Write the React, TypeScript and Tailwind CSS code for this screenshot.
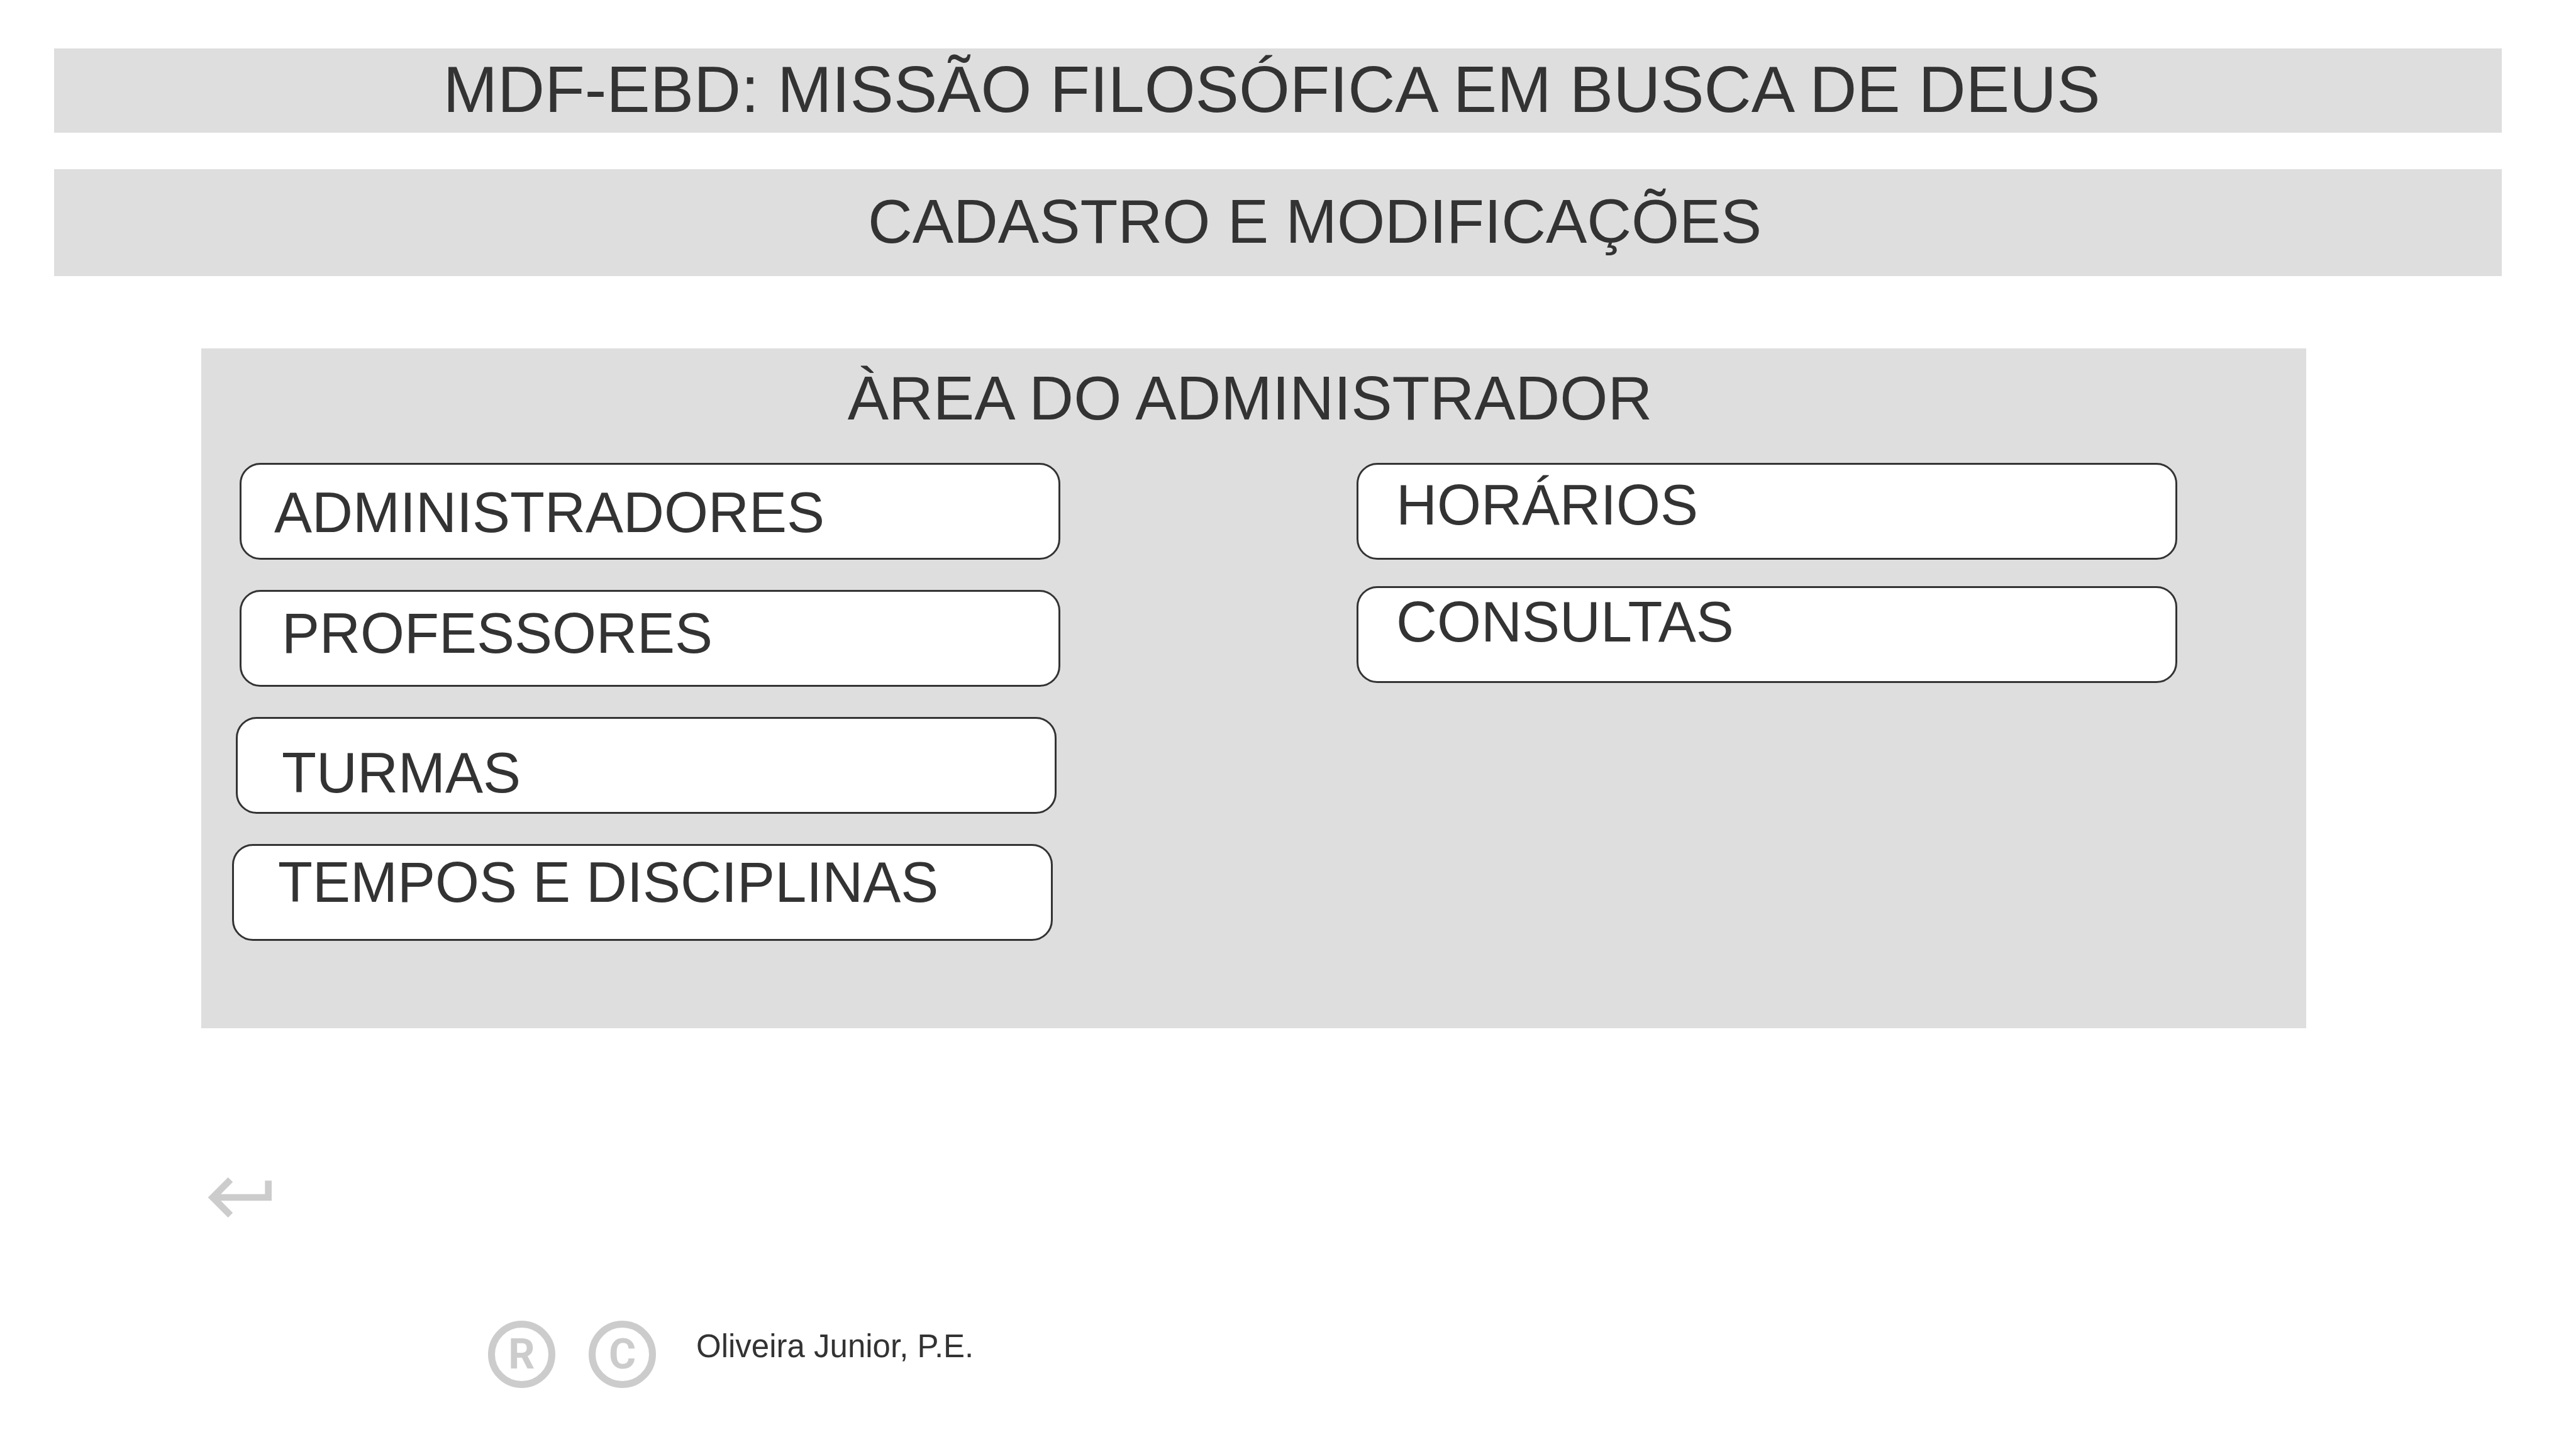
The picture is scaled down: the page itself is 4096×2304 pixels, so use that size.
type Option = { label: string; box: string; text: string };

const people: Option[] = [
  { label: "ADMINISTRADORES", box: "pl-3", text: "pt-6.5 pl-13" },
  { label: "PROFESSORES", box: "pl-3", text: "pt-4 pl-16" },
  { label: "TURMAS", box: "px-1.5", text: "pt-9 pl-[70px]" },
  { label: "TEMPOS E DISCIPLINAS", box: "pr-3", text: "pt-2 pl-[70px]" },
];

const schedule: Option[] = [
  { label: "HORÁRIOS", box: "pl-3", text: "pt-3.5 pl-15" },
  { label: "CONSULTAS", box: "pl-3", text: "pt-1 pl-15" },
];

function OptionButton({ label, box, text }: Option) {
  return (
    <li className={box}>
      <button
        type="button"
        className={`flex h-[154px] w-full items-start rounded-[33px] border-3 border-[#333333] bg-white text-left text-[90px] leading-[100px] whitespace-nowrap ${text}`}
      >
        {label}
      </button>
    </li>
  );
}

function Mark({ letter, name }: { letter: string; name: string }) {
  return (
    <span
      role="img"
      aria-label={name}
      className="flex size-[107px] items-center justify-center rounded-full border-[11px] border-[#cccccc] font-['Roboto',sans-serif] text-[66px] leading-none font-bold text-[#cccccc]"
    >
      {letter}
    </span>
  );
}

export default function App() {
  return (
    <div className="min-h-screen bg-white pt-[77px] font-['Liberation_Sans',Arial,sans-serif] text-[#333333]">
      <header className="mr-[118px] ml-[86px] flex flex-col gap-[58px] text-center">
        <h1 className="bg-[#dedede] pt-[7px] pr-5 pb-[11px] text-[104px] leading-[116px]">
          MDF-EBD: MISSÃO FILOSÓFICA EM BUSCA DE DEUS
        </h1>
        <h2 className="bg-[#dedede] pt-7 pb-8 pl-[117px] text-[98px] leading-[110px]">
          CADASTRO E MODIFICAÇÕES
        </h2>
      </header>

      <main className="mt-[115px] mr-[429px] ml-[320px] bg-[#dedede] pt-6 pb-[139px]">
        <h2 className="pr-3 text-center text-[98px] leading-[110px]">ÀREA DO ADMINISTRADOR</h2>
        <nav className="mt-12 mr-[205px] ml-[49px] grid grid-cols-2 gap-x-[459px]">
          <ul className="flex flex-col gap-12">
            {people.map((option) => (
              <OptionButton key={option.label} {...option} />
            ))}
          </ul>
          <ul className="flex flex-col gap-[42px]">
            {schedule.map((option) => (
              <OptionButton key={option.label} {...option} />
            ))}
          </ul>
        </nav>
      </main>

      <button type="button" aria-label="Voltar" className="mt-[205px] ml-[320px] block size-32">
        <svg viewBox="0 0 24 24" className="size-full fill-[#cccccc]" aria-hidden="true">
          <path d="M19 7v4H5.83l3.58-3.59L8 6l-6 6 6 6 1.41-1.41L5.83 13H21V7z" />
        </svg>
      </button>

      <footer className="mt-[132px] ml-[776px] flex items-start">
        <div className="flex gap-[53px]">
          <Mark letter="R" name="Marca registrada" />
          <Mark letter="C" name="Direitos autorais" />
        </div>
        <p className="pt-3 pl-16 text-[51px] leading-[58px]">Oliveira Junior, P.E.</p>
      </footer>
    </div>
  );
}
